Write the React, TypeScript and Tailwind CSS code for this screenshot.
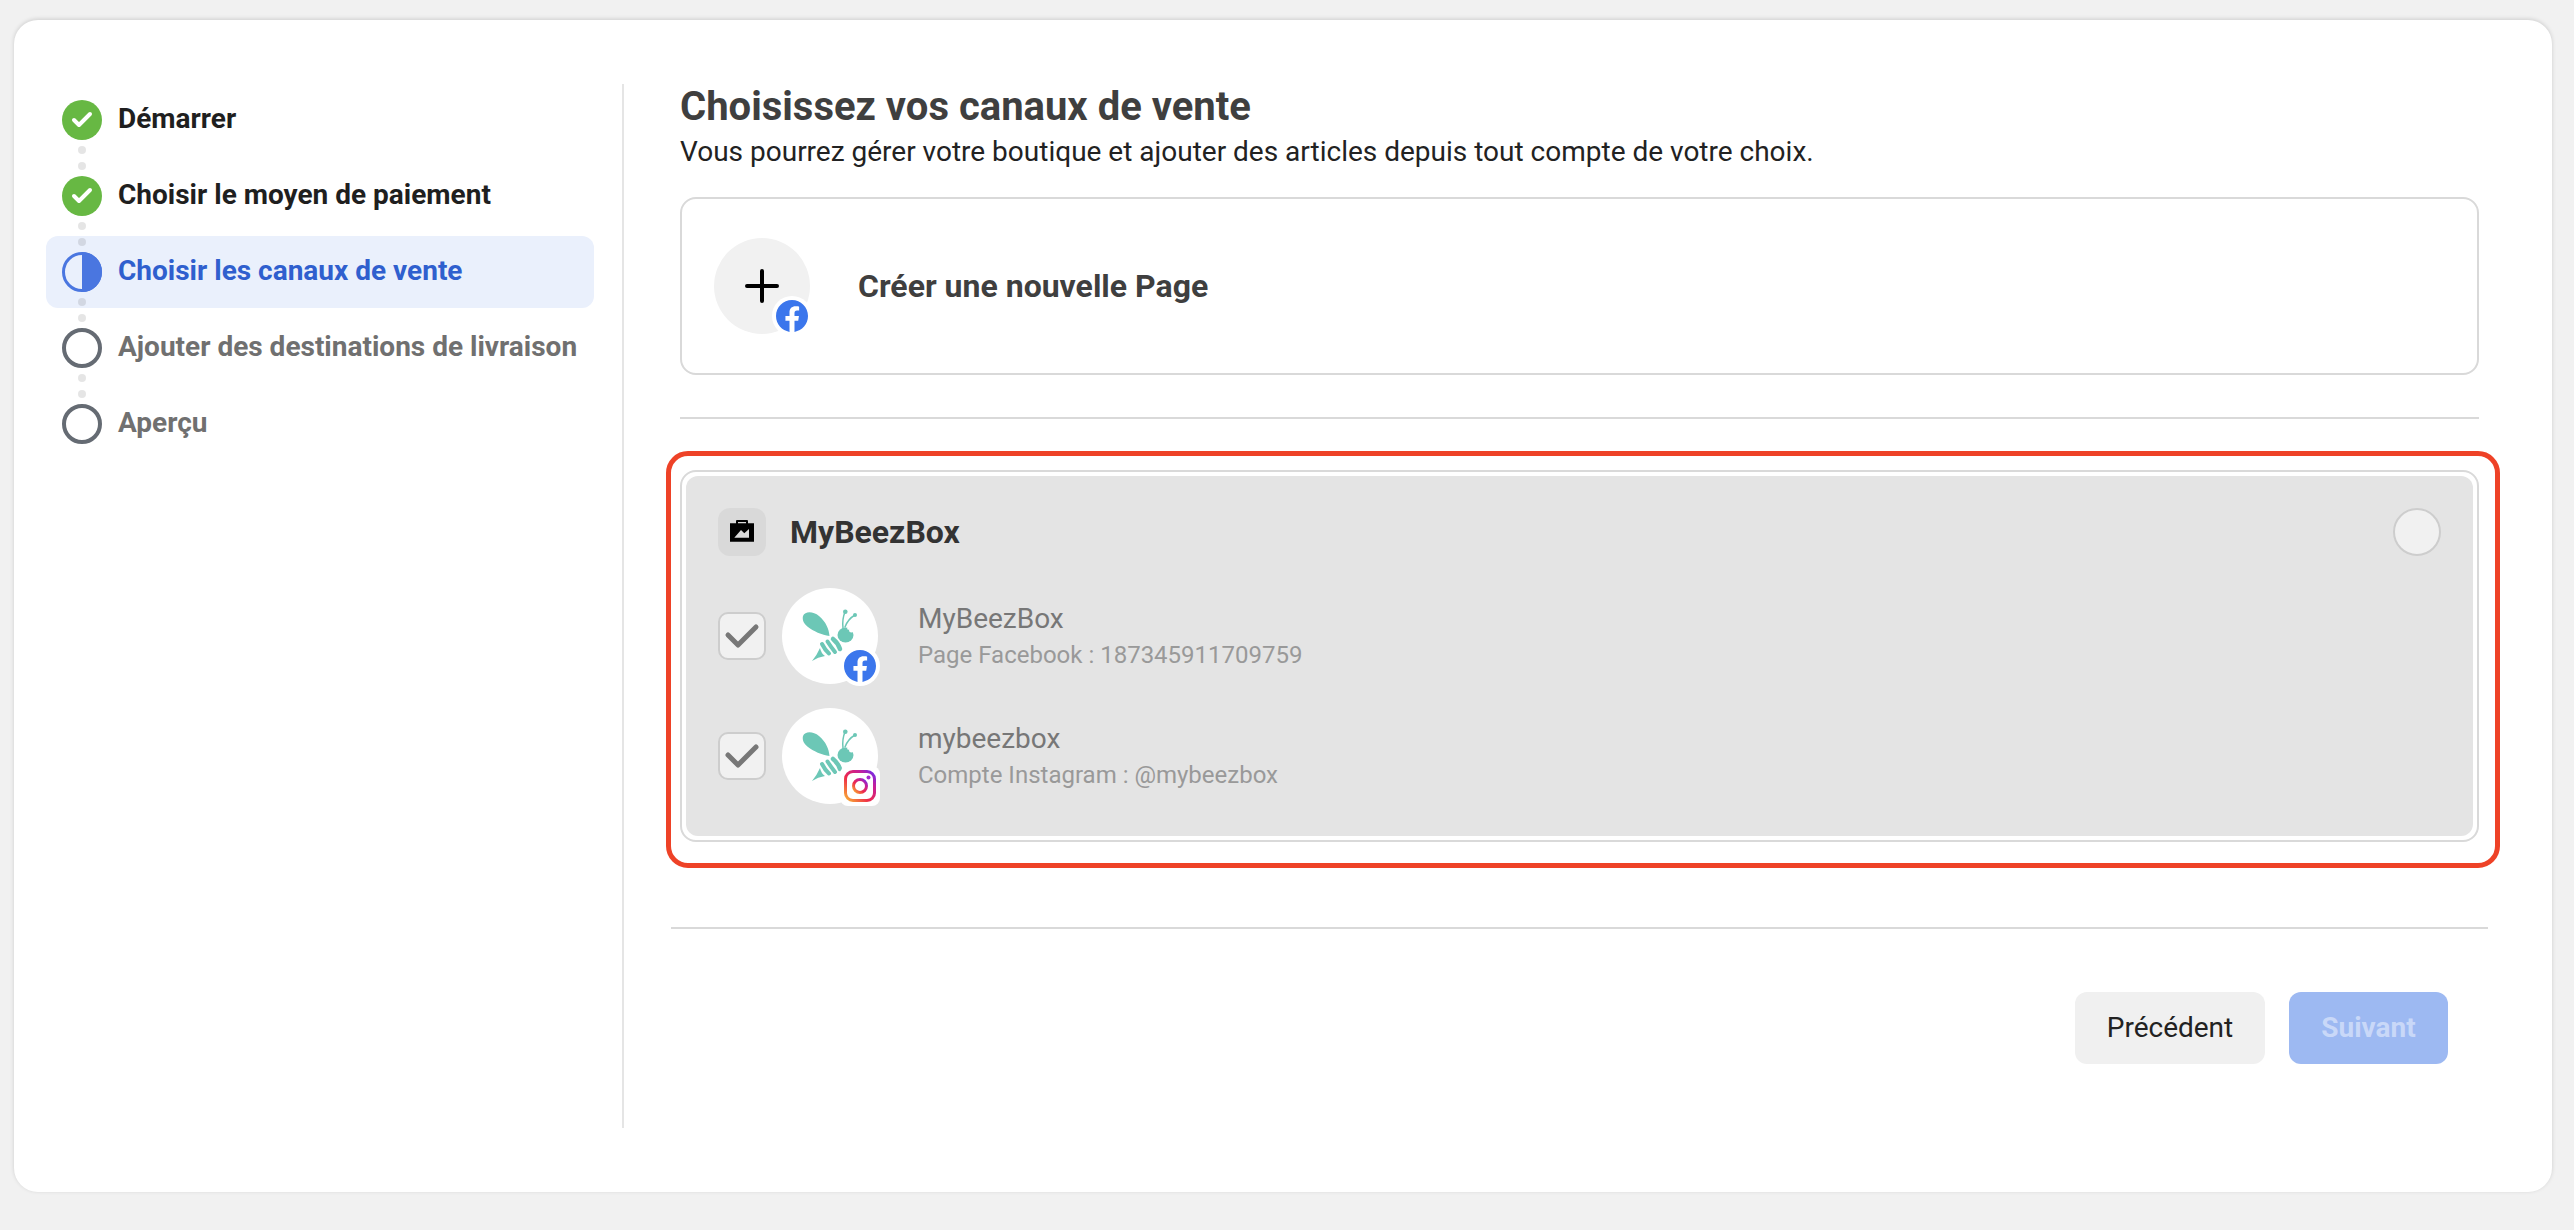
import { Check } from "lucide-react";

const steps = [
  { label: "Démarrer", state: "done" },
  { label: "Choisir le moyen de paiement", state: "done" },
  { label: "Choisir les canaux de vente", state: "active" },
  { label: "Ajouter des destinations de livraison", state: "todo" },
  { label: "Aperçu", state: "todo" },
];

function StepIcon({ state }: { state: string }) {
  if (state === "done") {
    return (
      <span className="flex h-10 w-10 shrink-0 items-center justify-center rounded-full bg-[#67b843]">
        <Check className="h-6 w-6 text-white" strokeWidth={4} />
      </span>
    );
  }
  if (state === "active") {
    return (
      <svg viewBox="0 0 40 40" className="h-10 w-10 shrink-0">
        <circle cx="20" cy="20" r="18.5" fill="none" stroke="#4a76e0" strokeWidth="3" />
        <path d="M20 0a20 20 0 0 1 0 40z" fill="#4a76e0" />
      </svg>
    );
  }
  return <span className="h-10 w-10 shrink-0 rounded-full border-[4px] border-[#656b73]" />;
}

function FacebookBadge() {
  return (
    <span className="absolute right-[-2px] bottom-[-2px] flex h-10 w-10 items-center justify-center rounded-full bg-white">
      <svg viewBox="0 0 24 24" className="h-8 w-8">
        <circle cx="12" cy="12" r="11" fill="#fff" />
        <path
          fill="#3b76ec"
          d="M24 12.073c0-6.627-5.373-12-12-12s-12 5.373-12 12c0 5.99 4.388 10.954 10.125 11.854v-8.385H7.078v-3.47h3.047V9.43c0-3.007 1.792-4.669 4.533-4.669 1.312 0 2.686.235 2.686.235v2.953H15.83c-1.491 0-1.956.925-1.956 1.874v2.25h3.328l-.532 3.47h-2.796v8.385C19.612 23.027 24 18.062 24 12.073z"
        />
      </svg>
    </span>
  );
}

function InstagramBadge() {
  return (
    <span className="absolute right-[-2px] bottom-[-2px] flex h-10 w-10 items-center justify-center rounded-lg bg-white">
      <svg viewBox="0 0 32 32" className="h-8 w-8">
        <defs>
          <linearGradient id="ig" x1="0" y1="1" x2="1" y2="0">
            <stop offset="0" stopColor="#f9b233" />
            <stop offset="0.4" stopColor="#ee2a4a" />
            <stop offset="0.75" stopColor="#c51f9a" />
            <stop offset="1" stopColor="#6b2bf0" />
          </linearGradient>
        </defs>
        <rect x="1.5" y="1.5" width="29" height="29" rx="7.5" fill="none" stroke="url(#ig)" strokeWidth="3" />
        <circle cx="16" cy="16" r="6.5" fill="none" stroke="url(#ig)" strokeWidth="3" />
        <circle cx="24.5" cy="7.5" r="2" fill="#a42ad0" />
      </svg>
    </span>
  );
}

function Bee() {
  return (
    <svg viewBox="0 0 96 96" className="h-24 w-24">
      <g fill="#6cc7b6">
        <path d="M21 28C23 23 31 23 37 28C44 34 47 41 47.5 48C40 47 31 43 26 39C22 36 20 32 21 28z" />
        <ellipse cx="63.5" cy="47" rx="8" ry="7.5" />
        <path d="M38 60Q39 65 43 68Q36 69 30 73Q35 67 38 60z" />
      </g>
      <circle cx="69.5" cy="42" r="2.5" fill="#fff" />
      <circle cx="66.5" cy="40.5" r="1.3" fill="#fff" />
      <g fill="none" stroke="#6cc7b6" strokeLinecap="round">
        <path d="M51 51Q56 55 58 61" strokeWidth="4.5" />
        <path d="M45.5 53.5Q49 59 53 64" strokeWidth="4" />
        <path d="M40 56Q43 62 47 65.5" strokeWidth="4" />
        <path d="M61 40Q60 31 63 24" strokeWidth="1.5" />
        <path d="M63 39Q66 31 73 27" strokeWidth="1.5" />
      </g>
      <circle cx="63.3" cy="23.7" r="2.3" fill="#6cc7b6" />
      <circle cx="73" cy="27" r="2" fill="#6cc7b6" />
    </svg>
  );
}

function PageRow({ name, detail, instagram }: { name: string; detail: string; instagram?: boolean }) {
  return (
    <div className="flex h-24 items-center">
      <span className="flex h-12 w-12 items-center justify-center rounded-[10px] border-2 border-[#cdcdcd] bg-[#f1f1f1]">
        <svg viewBox="2 2 44 44" className="h-11 w-11">
          <path d="M10 23l10 10L38 15" fill="none" stroke="#777" strokeWidth="5" strokeLinecap="round" strokeLinejoin="round" />
        </svg>
      </span>
      <div className="relative ml-4 h-24 w-24 rounded-full bg-white">
        <Bee />
        {instagram ? <InstagramBadge /> : <FacebookBadge />}
      </div>
      <div className="ml-10 flex flex-col pt-[2px]">
        <span className="text-[28px] leading-9 text-[#777]">{name}</span>
        <span className="text-[24px] leading-9 text-[#999]">{detail}</span>
      </div>
    </div>
  );
}

export default function App() {
  return (
    <div className="h-[1230px] overflow-hidden bg-[#f1f1f1] pt-5 pr-[22px] pl-[14px] font-['Roboto',sans-serif]">
      <div className="flex h-[1172px] rounded-3xl bg-white py-16 shadow-[0_-1px_4px_rgba(0,0,0,0.15)]">
        <aside className="ml-8 w-[578px] shrink-0 border-r-2 border-[#e5e5e5] pr-[28px]">
          <nav className="flex flex-col gap-1">
            {steps.map((step, i) => (
              <div
                key={step.label}
                className={`relative flex h-[72px] items-center gap-4 rounded-xl pl-4 ${step.state === "active" ? "bg-[#eaf0fc]" : ""}`}
              >
                <StepIcon state={step.state} />
                <span
                  className={`pb-[2px] text-[28px] font-bold whitespace-nowrap ${
                    step.state === "done" ? "text-[#1f1f1f]" : step.state === "active" ? "text-[#2f5fce]" : "text-[#707070]"
                  }`}
                >
                  {step.label}
                </span>
                {i < steps.length - 1 && (
                  <span className="absolute top-[62px] left-[32px] z-10 flex flex-col gap-2">
                    <span className="h-2 w-2 rounded-full bg-black/10" />
                    <span className="h-2 w-2 rounded-full bg-black/10" />
                  </span>
                )}
              </div>
            ))}
          </nav>
        </aside>

        <main className="ml-[56px] w-[1799px]">
          <h1 className="text-[40px] leading-[46px] font-bold text-[#3f3f3f]">Choisissez vos canaux de vente</h1>
          <p className="mt-1 text-[28px] leading-9 text-[#222]">
            Vous pourrez gérer votre boutique et ajouter des articles depuis tout compte de votre choix.
          </p>

          <div className="mt-[27px] flex h-[178px] items-center rounded-2xl border-2 border-[#d9d9d9] pl-8">
            <div className="relative flex h-24 w-24 items-center justify-center rounded-full bg-[#f1f1f1]">
              <svg viewBox="0 0 34 34" className="h-[34px] w-[34px]">
                <path d="M17 2v30M2 17h30" stroke="#000" strokeWidth="4" strokeLinecap="round" />
              </svg>
              <FacebookBadge />
            </div>
            <span className="ml-12 text-[32px] font-bold text-[#3f3f3f]">Créer une nouvelle Page</span>
          </div>

          <div className="mt-[42px] h-0.5 bg-[#d9d9d9]" />

          <section className="mt-8 ml-[-14px] w-[1834px] rounded-[22px] border-[5px] border-[#ee4227] pt-[14px] pr-4 pb-[21px] pl-[9px]">
            <div className="rounded-2xl border-2 border-[#d9d9d9] p-1">
              <div className="h-[360px] rounded-xl bg-[#e4e4e4] px-8 pt-8">
                <div className="flex h-12 items-center">
                  <span className="flex h-12 w-12 items-center justify-center rounded-xl bg-[#d9d9d9]">
                    <svg viewBox="0 0 24 24" className="h-6 w-6">
                      <path
                        fill="#000"
                        fillRule="evenodd"
                        d="M6 3.3V1a1 1 0 0 1 1-1h10a1 1 0 0 1 1 1v2.3h6v18.4H0V3.3zM8 2v1.3h8V2zM4.3 17.7H19V9l-4.7 4.3L11 10z"
                      />
                    </svg>
                  </span>
                  <span className="ml-6 text-[32px] font-bold text-[#333]">MyBeezBox</span>
                  <span className="ml-auto h-12 w-12 rounded-full border-2 border-[#cdcdcd] bg-[#f1f1f1]" />
                </div>
                <div className="mt-8 flex flex-col gap-6">
                  <PageRow name="MyBeezBox" detail="Page Facebook : 187345911709759" />
                  <PageRow name="mybeezbox" detail="Compte Instagram : @mybeezbox" instagram />
                </div>
              </div>
            </div>
          </section>

          <div className="mt-[59px] ml-[-9px] h-0.5 w-[1817px] bg-[#d9d9d9]" />

          <div className="mt-[63px] flex justify-end gap-6 pr-[31px]">
            <button className="h-[72px] w-[190px] rounded-xl bg-[#f0f0f0] text-[28px] text-[#222]">Précédent</button>
            <button className="h-[72px] w-[159px] rounded-xl bg-[#9db9f2] text-[28px] font-bold text-[#c9d8f8]">Suivant</button>
          </div>
        </main>
      </div>
    </div>
  );
}
